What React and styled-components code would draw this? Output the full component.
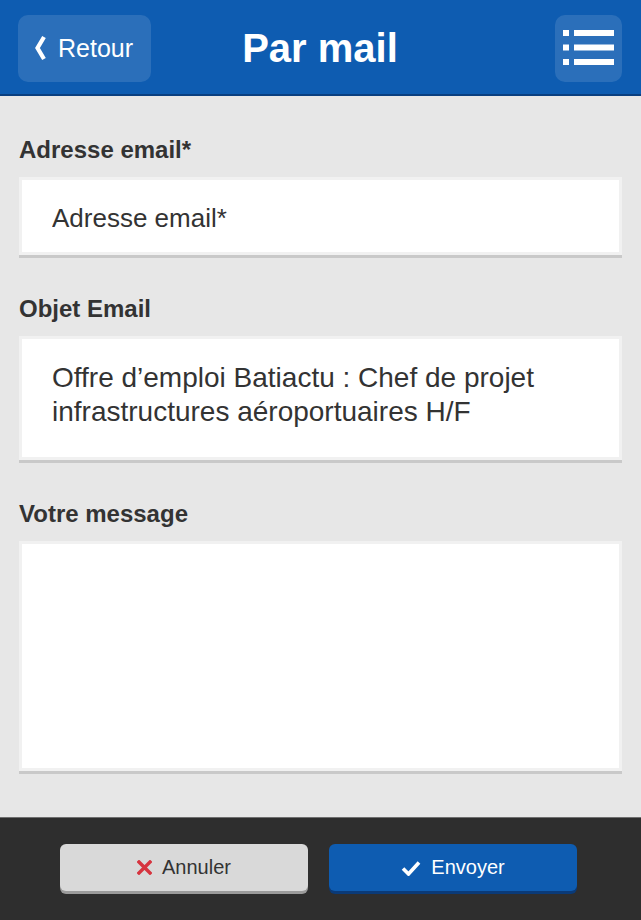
import React from 'react'
import styled, { createGlobalStyle } from 'styled-components'

const GlobalStyle = createGlobalStyle`
  html, body {
    margin: 0;
    padding: 0;
    background: #e7e7e7;
    font-family: "Liberation Sans", Arial, sans-serif;
  }
  * { box-sizing: border-box; }
`

const Page = styled.div`
  min-height: 100vh;
  display: flex;
  flex-direction: column;
`

const Header = styled.header`
  height: 96px;
  display: grid;
  grid-template-columns: 1fr auto 1fr;
  align-items: center;
  padding: 2px 19px 0 18px;
  background: #0e5cb1;
  border-bottom: 2px solid #0a3f80;
`

const HeaderButton = styled.button`
  height: 67px;
  width: ${p => p.$width}px;
  justify-self: ${p => p.$align};
  display: flex;
  align-items: center;
  justify-content: ${p => (p.$align === 'end' ? 'center' : 'flex-start')};
  gap: 12px;
  padding: 0 0 0 ${p => (p.$align === 'end' ? 0 : 16)}px;
  border: none;
  border-radius: 10px;
  background: rgba(255, 255, 255, 0.12);
  color: #fff;
  font-family: inherit;
  font-size: 25px;
  cursor: pointer;
`

const Title = styled.h1`
  margin: 0;
  color: #fff;
  font-size: 40px;
  font-weight: bold;
`

const Form = styled.main`
  flex: 1;
  display: flex;
  flex-direction: column;
  gap: 40px;
  padding: 40px 19px 44px;
`

const Field = styled.div`
  display: flex;
  flex-direction: column;
  gap: 13px;
`

const Label = styled.label`
  font-size: 24px;
  line-height: 28px;
  font-weight: bold;
  color: #333;
`

const boxStyle = `
  width: 100%;
  margin: 0;
  border: 3px solid #f1f1f1;
  border-radius: 0;
  background: #fff;
  box-shadow: 0 3px 0 #c9c9c9;
  color: #333;
  font-family: "Liberation Sans", Arial, sans-serif;
  outline: none;
  resize: none;
  overflow: hidden;
`

const TextInput = styled.input`
  ${boxStyle}
  height: 78px;
  padding: 5px 30px 0;
  font-size: 26px;
  &::placeholder { color: #333; opacity: 1; }
`

const TextArea = styled.textarea`
  ${boxStyle}
  display: block;
  height: ${p => p.$height}px;
  padding: 22px 30px;
  font-size: 28px;
  line-height: 34px;
`

const Footer = styled.footer`
  height: 103px;
  display: flex;
  justify-content: flex-start;
  align-items: flex-start;
  gap: 21px;
  padding: 26px 0 0 60px;
  background: #2e2e2e;
  border-top: 1px solid #6f6f6f;
`

const ActionButton = styled.button`
  width: 248px;
  height: 47px;
  display: flex;
  align-items: center;
  justify-content: center;
  gap: 10px;
  border: none;
  border-radius: 6px;
  background: ${p => (p.$primary ? '#0e5cb1' : '#d9d9d9')};
  box-shadow: 0 3px 0 ${p => (p.$primary ? '#0a3a78' : '#9b9b9b')};
  color: ${p => (p.$primary ? '#fff' : '#333')};
  font-family: inherit;
  font-size: 20px;
  cursor: pointer;
`

const Chevron = () => (
  <svg width="12" height="26" viewBox="0 0 12 26">
    <polyline points="10,2 3.5,13 10,24" fill="none" stroke="#fff" strokeWidth="4.2" strokeLinejoin="miter" />
  </svg>
)

const MenuIcon = () => (
  <svg width="51" height="36" viewBox="0 0 51 36">
    {[0, 14.5, 29].map(y => (
      <g key={y} fill="#fff">
        <rect x="0" y={y} width="6" height="6" />
        <rect x="11" y={y} width="40" height="6" />
      </g>
    ))}
  </svg>
)

const CrossIcon = () => (
  <svg width="15" height="15" viewBox="0 0 15 15">
    <path d="M2 2 L13 13 M13 2 L2 13" stroke="#d6343f" strokeWidth="3.4" strokeLinecap="square" />
  </svg>
)

const CheckIcon = () => (
  <svg width="20" height="16" viewBox="0 0 20 16">
    <path d="M2 8.5 L7.5 14 L18 2.5" fill="none" stroke="#fff" strokeWidth="3.6" />
  </svg>
)

export default function App() {
  return (
    <>
      <GlobalStyle />
      <Page>
        <Header>
          <HeaderButton $width={133} $align="start">
            <Chevron />
            Retour
          </HeaderButton>
          <Title>Par mail</Title>
          <HeaderButton $width={67} $align="end" aria-label="Menu">
            <MenuIcon />
          </HeaderButton>
        </Header>
        <Form>
          <Field>
            <Label htmlFor="email">Adresse email*</Label>
            <TextInput id="email" type="email" placeholder="Adresse email*" />
          </Field>
          <Field>
            <Label htmlFor="subject">Objet Email</Label>
            <TextArea
              id="subject"
              $height={124}
              defaultValue="Offre d’emploi Batiactu : Chef de projet infrastructures aéroportuaires H/F"
            />
          </Field>
          <Field>
            <Label htmlFor="message">Votre message</Label>
            <TextArea id="message" $height={230} />
          </Field>
        </Form>
        <Footer>
          <ActionButton>
            <CrossIcon />
            Annuler
          </ActionButton>
          <ActionButton $primary>
            <CheckIcon />
            Envoyer
          </ActionButton>
        </Footer>
      </Page>
    </>
  )
}
